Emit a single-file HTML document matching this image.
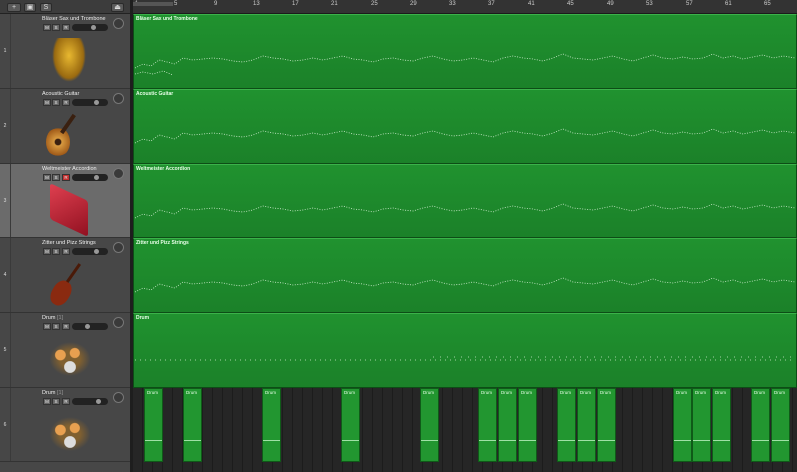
<!DOCTYPE html><html><head><style>
body{margin:0;width:797px;height:472px;overflow:hidden;background:#2a2a2a;font-family:"Liberation Sans",sans-serif;position:relative}
div{position:absolute;box-sizing:border-box}
.hdr{left:0;top:0;width:130px;height:14px;background:#3c3c3c;border-bottom:1px solid #222}
.btn{top:3px;height:9px;background:#5a5a5a;border:1px solid #2a2a2a;border-radius:2px;color:#ddd;font-size:7px;text-align:center;line-height:8px}
.ruler{left:133px;top:0;width:664px;height:14px;background:#333;border-bottom:1px solid #1a1a1a;color:#ccc;font-size:6px}
.ruler span{position:absolute;top:1px}
.trk{left:0;width:130px;background:#474747;border-bottom:1px solid #333}
.trk.sel{background:#6b6b6b}
.num{left:0;width:11px;height:100%;border-right:1px solid #3a3a3a;color:#ddd;font-size:5px;text-align:center}
.name{left:42px;top:2px;color:#eee;font-size:5.5px}
.msr{top:10px;width:8px;height:7px;background:#666;border:1px solid #333;color:#eee;font-size:4.5px;text-align:center;line-height:6px}
.sl{left:72px;top:10px;width:36px;height:7px;background:#222;border-radius:4px}
.knob{left:113px;top:4px;width:11px;height:11px;border-radius:50%;background:#3a3a3a;border:1px solid #777}
.reg{left:133px;width:664px;background:linear-gradient(#20922f,#1b8129);border:1px solid #0d4d16;border-top:1px solid #3bb24a}
.rn{left:2px;top:1px;color:#e8ffe8;font-size:5px;font-weight:bold}
.d{top:388px;width:19px;height:74px;background:#229630;border:1px solid #0f5a18}
.d span{position:absolute;left:2px;top:1px;font-size:4.5px;color:#e8ffe8}
.d i{position:absolute;left:0;right:0;top:51px;height:1px;background:#9fe0a5}
</style></head><body>
<div class="hdr"><div class="btn" style="left:7px;width:14px">+</div><div class="btn" style="left:24px;width:12px">▣</div><div class="btn" style="left:40px;width:12px">S</div><div class="btn" style="left:111px;width:13px">⏏</div></div>
<div style="left:130px;top:0;width:3px;height:472px;background:#1e1e1e"></div>
<div class="ruler">
<span style="left:2px">1</span><span style="left:41px">5</span><span style="left:81px">9</span><span style="left:120px">13</span><span style="left:159px">17</span><span style="left:198px">21</span><span style="left:238px">25</span><span style="left:277px">29</span><span style="left:316px">33</span><span style="left:355px">37</span><span style="left:395px">41</span><span style="left:434px">45</span><span style="left:474px">49</span><span style="left:513px">53</span><span style="left:553px">57</span><span style="left:592px">61</span><span style="left:631px">65</span>
<div style="left:0;top:2px;width:40px;height:4px;background:#555"></div></div>

<div class="trk" style="top:14px;height:75px"><div class="num" style="padding-top:34px">1</div><div class="name">Bläser Sax und Trombone</div><div class="msr" style="left:43px">M</div><div class="msr" style="left:52px">S</div><div class="msr" style="left:62px">R</div><div class="sl"><div style="left:19px;top:1px;width:5px;height:5px;border-radius:50%;background:#999"></div></div><div class="knob"></div><div style="left:52px;top:24px;width:34px;height:44px;background:radial-gradient(ellipse at 50% 40%,#e8b830,#9a6a10 60%,transparent 70%)"></div></div>
<div class="trk" style="top:89px;height:75px"><div class="num" style="padding-top:34px">2</div><div class="name">Acoustic Guitar</div><div class="msr" style="left:43px">M</div><div class="msr" style="left:52px">S</div><div class="msr" style="left:62px">R</div><div class="sl"><div style="left:22px;top:1px;width:5px;height:5px;border-radius:50%;background:#999"></div></div><div class="knob"></div><div style="left:46px;top:38px;width:24px;height:30px;border-radius:50%;background:radial-gradient(circle at 50% 50%,#3a2010 15%,#d89a40 20%,#a05a18 70%,transparent 72%)"></div><div style="left:66px;top:24px;width:4px;height:22px;background:#3a2010;transform:rotate(35deg)"></div></div>
<div class="trk sel" style="top:164px;height:74px"><div class="num" style="padding-top:34px">3</div><div class="name">Weltmeister Accordion</div><div class="msr" style="left:43px">M</div><div class="msr" style="left:52px">S</div><div class="msr" style="left:62px;background:#c03030">R</div><div class="sl"><div style="left:22px;top:1px;width:5px;height:5px;border-radius:50%;background:#999"></div></div><div class="knob"></div><div style="left:50px;top:28px;width:38px;height:36px;background:linear-gradient(135deg,#e04050,#901020);transform:skewY(25deg);border-radius:3px"></div></div>
<div class="trk" style="top:238px;height:75px"><div class="num" style="padding-top:34px">4</div><div class="name">Zitter und Pizz Strings</div><div class="msr" style="left:43px">M</div><div class="msr" style="left:52px">S</div><div class="msr" style="left:62px">R</div><div class="sl"><div style="left:22px;top:1px;width:5px;height:5px;border-radius:50%;background:#999"></div></div><div class="knob"></div><div style="left:52px;top:42px;width:18px;height:26px;border-radius:45%;background:#8a2a10;transform:rotate(30deg)"></div><div style="left:72px;top:24px;width:3px;height:22px;background:#4a1a08;transform:rotate(35deg)"></div></div>
<div class="trk" style="top:313px;height:75px"><div class="num" style="padding-top:34px">5</div><div class="name">Drum <span style="color:#999">[1]</span></div><div class="msr" style="left:43px">M</div><div class="msr" style="left:52px">S</div><div class="msr" style="left:62px">R</div><div class="sl"><div style="left:13px;top:1px;width:5px;height:5px;border-radius:50%;background:#999"></div></div><div class="knob"></div><div style="left:46px;top:26px;width:48px;height:40px;background:radial-gradient(circle at 50% 70%,#ddd 15%,transparent 17%),radial-gradient(circle at 30% 40%,#e8a050 12%,transparent 14%),radial-gradient(circle at 60% 35%,#e8a050 12%,transparent 14%),radial-gradient(ellipse at 50% 50%,#806030 30%,transparent 60%)"></div></div>
<div class="trk" style="top:388px;height:74px"><div class="num" style="padding-top:34px">6</div><div class="name">Drum <span style="color:#999">[1]</span></div><div class="msr" style="left:43px">M</div><div class="msr" style="left:52px">S</div><div class="msr" style="left:62px">R</div><div class="sl"><div style="left:24px;top:1px;width:5px;height:5px;border-radius:50%;background:#999"></div></div><div class="knob"></div><div style="left:46px;top:26px;width:48px;height:40px;background:radial-gradient(circle at 50% 70%,#ddd 15%,transparent 17%),radial-gradient(circle at 30% 40%,#e8a050 12%,transparent 14%),radial-gradient(circle at 60% 35%,#e8a050 12%,transparent 14%),radial-gradient(ellipse at 50% 50%,#806030 30%,transparent 60%)"></div></div>
<div style="left:0;top:462px;width:130px;height:10px;background:#474747"></div>

<div class="reg" style="top:14px;height:75px"><div class="rn">Bläser Sax und Trombone</div></div>
<div class="reg" style="top:89px;height:75px"><div class="rn">Acoustic Guitar</div></div>
<div class="reg" style="top:164px;height:74px"><div class="rn">Weltmeister Accordion</div></div>
<div class="reg" style="top:238px;height:75px"><div class="rn">Zitter und Pizz Strings</div></div>
<div class="reg" style="top:313px;height:75px"><div class="rn">Drum</div></div>
<svg style="position:absolute;left:133px;top:14px" width="664" height="375">
<g fill="none" stroke="#cfeccf" stroke-width="0.8" stroke-dasharray="1 1.5" transform="translate(0,14)">
<polyline id="m" points="2,40 10,36 18,38 26,32 34,34 42,36 50,30 60,32 70,31 80,30 90,31 100,33 110,34 120,32 130,28 140,30 150,31 160,33 170,32 180,30 190,32 200,30 210,28 220,31 230,32 240,34 250,31 260,30 270,32 280,33 290,30 300,28 310,31 320,33 330,32 340,30 350,32 360,34 370,30 380,28 390,30 400,31 410,33 420,30 430,26 440,30 450,31 460,32 470,30 480,28 490,31 500,33 510,30 520,27 530,30 540,31 550,29 560,31 570,30 580,26 590,30 600,28 610,31 620,29 630,27 640,30 650,28 662,30"/>
<use href="#m" y="75"/><use href="#m" y="150"/><use href="#m" y="224"/>
<polyline points="2,46 10,44 20,46 30,43 40,47" />
</g>
<line x1="2" y1="346" x2="662" y2="346" stroke="#cfeccf" stroke-width="0.8" stroke-dasharray="1 4"/>
<line x1="300" y1="343" x2="662" y2="343" stroke="#cfeccf" stroke-width="0.8" stroke-dasharray="1 6"/>
</svg>
<div style="left:133px;top:388px;width:664px;height:84px;background:repeating-linear-gradient(90deg,#262626 0,#262626 9px,#1c1c1c 9px,#1c1c1c 10px)"></div>
<div class="d" style="left:144px"><span>Drum</span><i></i></div>
<div class="d" style="left:183px"><span>Drum</span><i></i></div>
<div class="d" style="left:262px"><span>Drum</span><i></i></div>
<div class="d" style="left:341px"><span>Drum</span><i></i></div>
<div class="d" style="left:420px"><span>Drum</span><i></i></div>
<div class="d" style="left:478px"><span>Drum</span><i></i></div>
<div class="d" style="left:498px"><span>Drum</span><i></i></div>
<div class="d" style="left:518px"><span>Drum</span><i></i></div>
<div class="d" style="left:557px"><span>Drum</span><i></i></div>
<div class="d" style="left:577px"><span>Drum</span><i></i></div>
<div class="d" style="left:597px"><span>Drum</span><i></i></div>
<div class="d" style="left:673px"><span>Drum</span><i></i></div>
<div class="d" style="left:692px"><span>Drum</span><i></i></div>
<div class="d" style="left:712px"><span>Drum</span><i></i></div>
<div class="d" style="left:751px"><span>Drum</span><i></i></div>
<div class="d" style="left:771px"><span>Drum</span><i></i></div>
</body></html>
